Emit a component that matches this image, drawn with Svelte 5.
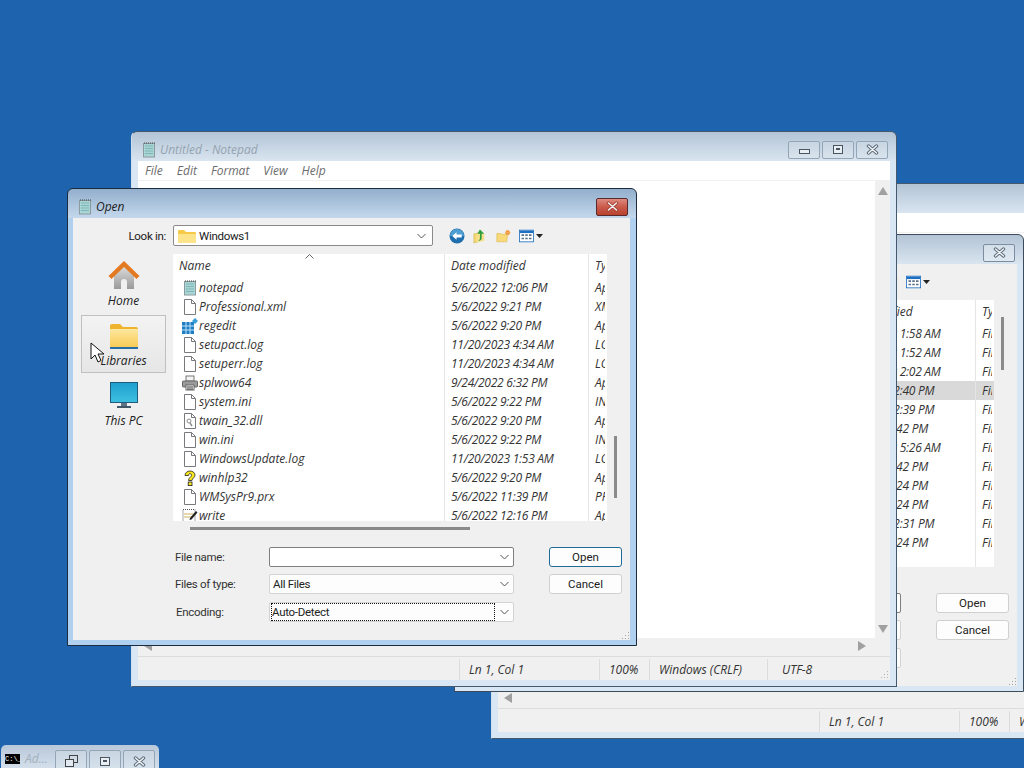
<script lang="ts">
	const rows1 = [
		{ icon: 'notepad', name: 'notepad', date: '5/6/2022 12:06 PM', type: 'Application' },
		{ icon: 'doc', name: 'Professional.xml', date: '5/6/2022 9:21 PM', type: 'XML Document' },
		{ icon: 'regedit', name: 'regedit', date: '5/6/2022 9:20 PM', type: 'Application' },
		{ icon: 'doc', name: 'setupact.log', date: '11/20/2023 4:34 AM', type: 'LOG File' },
		{ icon: 'doc', name: 'setuperr.log', date: '11/20/2023 4:34 AM', type: 'LOG File' },
		{ icon: 'printer', name: 'splwow64', date: '9/24/2022 6:32 PM', type: 'Application' },
		{ icon: 'doc', name: 'system.ini', date: '5/6/2022 9:22 PM', type: 'INI File' },
		{ icon: 'dll', name: 'twain_32.dll', date: '5/6/2022 9:20 PM', type: 'Application' },
		{ icon: 'doc', name: 'win.ini', date: '5/6/2022 9:22 PM', type: 'INI File' },
		{ icon: 'doc', name: 'WindowsUpdate.log', date: '11/20/2023 1:53 AM', type: 'LOG File' },
		{ icon: 'help', name: 'winhlp32', date: '5/6/2022 9:20 PM', type: 'Application' },
		{ icon: 'doc', name: 'WMSysPr9.prx', date: '5/6/2022 11:39 PM', type: 'PRX File' },
		{ icon: 'write', name: 'write', date: '5/6/2022 12:16 PM', type: 'Application' }
	];

	// second dialog sits behind notepad, only the right hand side shows
	const rows2 = [
		'11/20/2023 1:58 AM',
		'11/20/2023 1:52 AM',
		'11/20/2023 2:02 AM',
		'5/6/2022 12:40 PM',
		'5/6/2022 12:39 PM',
		'5/6/2022 9:42 PM',
		'11/20/2023 5:26 AM',
		'5/6/2022 9:42 PM',
		'5/6/2022 9:24 PM',
		'5/6/2022 9:24 PM',
		'5/6/2022 12:31 PM',
		'5/6/2022 9:24 PM'
	].map((date, i) => ({ icon: '', name: '', date, type: 'File folder', selected: i === 3 }));

	const menu = ['File', 'Edit', 'Format', 'View', 'Help'];
</script>

{#snippet notepadIcon()}
	<svg width="16" height="16" viewBox="0 0 16 16">
		<rect x="2.5" y="1.5" width="11" height="13.5" fill="#a9d6d4" stroke="#8c9aa0" />
		<path d="M4 4h8M4 6.5h8M4 9h8M4 11.5h8" stroke="#7fb5b8" />
		<path d="M3 1h1M5 1h1M7 1h1M9 1h1M11 1h1M13 1h1" stroke="#444" />
	</svg>
{/snippet}

{#snippet fileIcon(kind)}
	{#if kind === 'notepad'}
		{@render notepadIcon()}
	{:else if kind === 'doc' || kind === 'dll'}
		<svg width="16" height="16" viewBox="0 0 16 16">
			<path d="M2.5 .5h7l4 4v11h-11z" fill="#fff" stroke="#77797c" />
			<path d="M9.5 .5v4h4" fill="none" stroke="#77797c" />
			{#if kind === 'dll'}
				<circle cx="7" cy="8" r="2" fill="none" stroke="#8a8a8a" />
				<path d="M8 10l2 3" stroke="#8a8a8a" stroke-width="1.4" />
			{/if}
		</svg>
	{:else if kind === 'regedit'}
		<svg width="16" height="16" viewBox="0 0 16 16">
			<rect x="0" y="4" width="12" height="12" fill="#1f7fc4" />
			<path d="M4 4v12M8 4v12M0 8h12M0 12h12" stroke="#bfe0f5" />
			<path d="M13 0l3 3-3 3-3-3z" fill="#3a9fd8" />
		</svg>
	{:else if kind === 'printer'}
		<svg width="16" height="16" viewBox="0 0 16 16">
			<rect x="4" y="1" width="8" height="5" fill="#f4f4f4" stroke="#777" />
			<rect x=".5" y="6" width="15" height="6" rx="1" fill="#9a9a9a" stroke="#666" />
			<rect x="4" y="10" width="8" height="5" fill="#fff" stroke="#666" />
			<path d="M5 12h6M5 14h6" stroke="#333" />
		</svg>
	{:else if kind === 'help'}
		<svg width="16" height="16" viewBox="0 0 16 16">
			<path d="M3 5.500C3 2.500 5.500 1 8 1s5 1.500 5 4.200c0 2.500-3 3-3 5.300H6.500c0-3 3-3.500 3-5.300 0-1-.7-1.500-1.500-1.500S6.500 4.400 6.500 5.500z" fill="#f6e51e" stroke="#222" stroke-width=".8" />
			<rect x="6.200" y="12" width="3.800" height="3.600" fill="#f6e51e" stroke="#222" stroke-width=".8" />
		</svg>
	{:else if kind === 'write'}
		<svg width="16" height="16" viewBox="0 0 16 16">
			<rect x="1" y="1.500" width="12" height="13" fill="#fff" stroke="#555" stroke-dasharray="1 1" />
			<path d="M2 6h10M2 9h8" stroke="#c9b45a" />
			<path d="M14 3l1.500 1.500-6 7-2 .5.500-2z" fill="#222" />
		</svg>
	{/if}
{/snippet}

{#snippet closeGlyph()}
	<svg width="13" height="11" viewBox="0 0 13 11">
		<path d="M2.500 2l8 7M10.500 2l-8 7" stroke="currentColor" stroke-width="3.400" stroke-linecap="round" />
		<path d="M2.500 2l8 7M10.500 2l-8 7" stroke="#f4f7fa" stroke-width="1.400" stroke-linecap="round" />
	</svg>
{/snippet}

{#snippet chevron()}
	<svg class="chev" width="9" height="6" viewBox="0 0 9 6">
		<path d="M.5 1l4 4 4-4" fill="none" stroke="#555" />
	</svg>
{/snippet}

{#snippet dialog(cls, rows, active, thumbTop, thumbHeight)}
	<section class="dialog {cls}" class:inactive={!active}>
		<header class="dlg-title">
			{@render notepadIcon()}
			<span>Open</span>
			<button class="dlg-close" class:red={active}>{@render closeGlyph()}</button>
		</header>
		<div class="dlg-body">
			<div class="lookin">
				<span class="lookin-label">Look in:</span>
				<div class="combo">
					<svg width="18" height="14" viewBox="0 0 18 14">
						<path d="M0 2a1 1 0 0 1 1-1h5l2 2h9a1 1 0 0 1 1 1v9a1 1 0 0 1-1 1H1a1 1 0 0 1-1-1z" fill="#f7c948" />
						<path d="M0 5h18v8a1 1 0 0 1-1 1H1a1 1 0 0 1-1-1z" fill="#fde38a" />
					</svg>
					<span class="combo-text">Windows1</span>
					{@render chevron()}
				</div>
				<div class="tools">
					<svg width="16" height="16" viewBox="0 0 17 17">
						<circle cx="8.500" cy="8.500" r="8" fill="#1f6fae" />
						<path d="M1 8.500a7.500 7.500 0 0 1 15 0z" fill="#4f9ed2" />
						<path d="M3.500 8.500l4.500-4v2.500h5.500v3H8v2.500z" fill="#fff" />
					</svg>
					<svg class="up" width="13" height="16" viewBox="0 0 15 17">
						<path d="M1 6l5-1v10l-5 1.500z" fill="#f4d774" stroke="#cfae45" stroke-width=".6" />
						<path d="M4 16V6h9v8z" fill="#f7e08c" />
						<path d="M8 1l5 5h-3v5c0 2-2 3-4 3 1.500-1 2-2 2-3V6H5z" fill="#2f9e3a" />
					</svg>
					<svg width="15" height="14" viewBox="0 0 18 16">
						<path d="M1 5h5l1 1h7l-1 9H1z" fill="#f7d97a" stroke="#dcb84f" stroke-width=".7" />
						<circle cx="14" cy="4" r="2.800" fill="#ee8a2c" />
						<path d="M14 .5v7M10.500 4h7" stroke="#f7b561" />
					</svg>
					<div class="viewbtn">
						<svg width="15" height="14" viewBox="0 0 18 15">
							<rect x=".5" y=".5" width="17" height="14" fill="#fff" stroke="#1f6fc0" />
							<rect x="1" y="1" width="16" height="3" fill="#1f6fc0" />
							<path d="M3 6.500h3M7.500 6.500h3M12 6.500h3M3 10.500h3M7.500 10.500h3M12 10.500h3" stroke="#5a6f8a" stroke-width="2" />
						</svg>
						<svg width="7" height="4" viewBox="0 0 7 4"><path d="M0 0h7L3.500 4z" fill="#222" /></svg>
					</div>
				</div>
			</div>

			<div class="middle">
				<nav class="places">
					<div class="place">
						<svg width="32" height="32" viewBox="0 0 32 32">
							<defs>
								<linearGradient id="homebody" x1="0" y1="0" x2="0" y2="1">
									<stop offset="0" stop-color="#dcdcdc" />
									<stop offset="1" stop-color="#9a9a9a" />
								</linearGradient>
							</defs>
							<path d="M6 15L16 6l10 9v14H19v-7a3 3 0 0 0-6 0v7H6z" fill="url(#homebody)" />
							<path d="M.5 16L16 1l15.500 15-3 3L16 7 3.500 19z" fill="#e37a22" />
						</svg>
						<span>Home</span>
					</div>
					<div class="place hovered">
						<svg width="32" height="32" viewBox="0 0 32 32">
							<defs>
								<linearGradient id="libbody" x1="0" y1="0" x2="0" y2="1">
									<stop offset="0" stop-color="#fde79f" />
									<stop offset="1" stop-color="#f8cc56" />
								</linearGradient>
							</defs>
							<path d="M2 6a2 2 0 0 1 2-2h8l3 3h13a2 2 0 0 1 2 2v20H2z" fill="#eeb32f" />
							<rect x="2" y="9" width="28" height="18" fill="url(#libbody)" />
							<rect x="2" y="27" width="28" height="2" fill="#2a6ea8" />
						</svg>
						<span>Libraries</span>
					</div>
					<div class="place">
						<svg width="32" height="32" viewBox="0 0 32 32">
							<defs>
								<linearGradient id="pcscreen" x1="0" y1="0" x2="0" y2="1">
									<stop offset="0" stop-color="#1f9fce" />
									<stop offset="1" stop-color="#3dc0e0" />
								</linearGradient>
							</defs>
							<rect x="2.500" y="2.500" width="27" height="20" fill="url(#pcscreen)" stroke="#1f5d80" />
							<rect x="13" y="23" width="6" height="3" fill="#5e7484" />
							<rect x="9" y="26" width="14" height="2" fill="#3f5766" />
						</svg>
						<span>This PC</span>
					</div>
				</nav>

				<div class="list">
					<div class="row head">
						<div class="cell name-cell">Name</div>
						<div class="cell">Date modified</div>
						<div class="cell">Type</div>
					</div>
					<svg class="sort" width="9" height="5" viewBox="0 0 9 5">
						<path d="M.5 4.500l4-4 4 4" fill="none" stroke="#666" />
					</svg>
					{#each rows as r}
						<div class="row" class:selected={r.selected}>
							<div class="cell name-cell">
								{#if r.icon}{@render fileIcon(r.icon)}{/if}
								<span>{r.name}</span>
							</div>
							<div class="cell date-cell">{r.date}</div>
							<div class="cell">{r.type}</div>
						</div>
					{/each}
					<div class="fill">
						<i></i><i></i><i></i>
					</div>
				</div>

				<div class="vtrack">
					<div class="vthumb" style="margin-top: {thumbTop}px; height: {thumbHeight}px"></div>
				</div>
			</div>

			<div class="hthumb"></div>

			<div class="form">
				<span class="lbl">File name:</span>
				<div class="select focus-in">{@render chevron()}</div>
				<button class="btn" class:default={active}>Open</button>
				<span class="lbl">Files of type:</span>
				<div class="select"><span class="lbl">All Files</span>{@render chevron()}</div>
				<button class="btn">Cancel</button>
				<span class="lbl enc">Encoding:</span>
				<div class="select last"><span class="dotted">Auto-Detect</span>{@render chevron()}</div>
			</div>

			<svg class="grip" width="9" height="9" viewBox="0 0 9 9">
				<path d="M7 1h1v1H7zM4 4h1v1H4zM7 4h1v1H7zM1 7h1v1H1zM4 7h1v1H4zM7 7h1v1H7z" fill="#a5a5a5" />
			</svg>
		</div>
	</section>
{/snippet}

{#snippet notepad(cls)}
	<section class="notepad {cls}">
		<header class="np-title">
			{@render notepadIcon()}
			<span>Untitled - Notepad</span>
			<div class="np-buttons">
				<button class="cap"><i class="min"></i></button>
				<button class="cap"><i class="max"></i></button>
				<button class="cap">{@render closeGlyph()}</button>
			</div>
		</header>
		<div class="np-menu">
			{#each menu as m}<span>{m}</span>{/each}
		</div>
		<div class="np-edit">
			<div class="np-text"></div>
			<div class="np-vscroll">
				<svg width="10" height="8" viewBox="0 0 10 8"><path d="M5 0l5 8H0z" fill="#a0a0a0" /></svg>
				<svg width="10" height="8" viewBox="0 0 10 8"><path d="M5 8l5-8H0z" fill="#a0a0a0" /></svg>
			</div>
			<div class="np-hscroll">
				<svg width="8" height="10" viewBox="0 0 8 10"><path d="M0 5l8 5V0z" fill="#a0a0a0" /></svg>
				<svg width="8" height="10" viewBox="0 0 8 10"><path d="M8 5L0 10V0z" fill="#a0a0a0" /></svg>
			</div>
		</div>
		<footer class="np-status">
			<div class="st-grow"></div>
			<div class="st st-pos">Ln 1, Col 1</div>
			<div class="st st-zoom">100%</div>
			<div class="st st-eol">Windows (CRLF)</div>
			<div class="st st-enc">UTF-8</div>
			<svg class="grip" width="9" height="9" viewBox="0 0 9 9">
				<path d="M7 1h1v1H7zM4 4h1v1H4zM7 4h1v1H7zM1 7h1v1H1zM4 7h1v1H4zM7 7h1v1H7z" fill="#b5b5b5" />
			</svg>
		</footer>
	</section>
{/snippet}

<main class="desktop">
	{@render notepad('np-back')}
	{@render dialog('dlg-back', rows2, false, 17, 53)}
	{@render notepad('np-front')}
	{@render dialog('dlg-front', rows1, true, 182, 62)}

	<section class="mini">
		<span class="cmd">C:\_</span>
		<span class="mini-text">Ad...</span>
		<button class="cap mini-btn">
			<svg width="13" height="12" viewBox="0 0 13 12">
				<rect x="4.500" y=".5" width="8" height="7" fill="none" stroke="#444" />
				<rect x=".5" y="4.500" width="8" height="7" fill="#e3e9f0" stroke="#444" />
			</svg>
		</button>
		<button class="cap mini-btn"><i class="max"></i></button>
		<button class="cap mini-btn">{@render closeGlyph()}</button>
	</section>

	<svg class="cursor" width="15" height="21" viewBox="0 0 15 21">
		<path d="M1 1v16l4-4 3 7 3-1.500-3-6.500h6z" fill="#fff" stroke="#111" stroke-width="1" />
	</svg>
</main>

<style>
	:global(body) {
		margin: 0;
	}

	.desktop {
		position: relative;
		width: 1024px;
		height: 768px;
		overflow: hidden;
		background: #1e63ae;
		font-family: 'Open Sans', 'Noto Sans', sans-serif;
		font-size: 12px;
		color: #1a1a1a;
	}

	button {
		font: inherit;
		padding: 0;
	}

	/* notepad windows */
	.notepad {
		position: absolute;
		width: 766px;
		height: 556px;
		box-sizing: border-box;
		display: flex;
		flex-direction: column;
		padding: 0 6px 6px;
		border-radius: 6px 6px 0 0;
		border: 1px solid #44586e;
		border-left-color: #cfdeec;
		background: linear-gradient(#b3c4d6 0, #d9e5f0 29px, #d9e6f3 29px);
	}

	.np-back {
		left: 491px;
		top: 183px;
	}

	.np-front {
		left: 131px;
		top: 131px;
	}

	.np-title {
		height: 29px;
		box-sizing: border-box;
		flex: none;
		display: flex;
		align-items: center;
		gap: 3px;
		padding: 6px 0 0 3px;
		font-style: italic;
		color: #95a3b1;
	}

	.np-buttons {
		margin-left: auto;
		display: flex;
		gap: 2px;
		padding-right: 2px;
	}

	.cap {
		width: 32px;
		height: 18px;
		display: flex;
		align-items: center;
		justify-content: center;
		background: linear-gradient(#c8d5e2, #d8e3ed);
		border: 1px solid #94a5b6;
		border-radius: 2px;
		color: #5c6a78;
	}

	.min {
		display: block;
		width: 9px;
		height: 3px;
		margin-top: 4px;
		border: 1px solid #4a5560;
		background: #e8eef4;
	}

	.max {
		position: relative;
		display: block;
		width: 8px;
		height: 7px;
		border: 1px solid #4a5560;
		background: #e8eef4;
	}

	.max::after {
		content: '';
		position: absolute;
		left: 2px;
		top: 2px;
		width: 4px;
		height: 2px;
		background: #4a5560;
	}

	.np-menu {
		height: 19px;
		flex: none;
		background: #fff;
		display: flex;
		align-items: center;
		gap: 14px;
		padding-left: 7px;
		font-style: italic;
		color: #6c6c6c;
	}

	.np-edit {
		flex: 1;
		display: grid;
		grid-template-columns: 1fr 15px;
		grid-template-rows: 1fr 18px;
		border-top: 1px solid #f0f0f0;
		background: #f0f0f0;
		min-height: 0;
	}

	.np-text {
		background: #fff;
	}

	.np-vscroll {
		display: flex;
		flex-direction: column;
		justify-content: space-between;
		align-items: center;
		padding: 6px 0 5px;
	}

	.np-hscroll {
		grid-column: 1 / 3;
		display: flex;
		justify-content: space-between;
		align-items: center;
		padding: 0 24px 2px 6px;
	}

	.np-status {
		position: relative;
		height: 23px;
		flex: none;
		display: flex;
		background: #f0f0f0;
		border-top: 1px solid #dcdcdc;
		font-style: italic;
		color: #333;
	}

	.st-grow {
		flex: 1;
	}

	.st {
		border-left: 1px solid #dcdcdc;
		padding-left: 9px;
		margin-top: 2px;
		line-height: 21px;
		box-sizing: border-box;
		white-space: nowrap;
	}

	.st-pos {
		width: 140px;
	}

	.st-zoom {
		width: 50px;
	}

	.st-eol {
		width: 118px;
	}

	.st-enc {
		width: 123px;
		padding-left: 14px;
	}

	.np-status .grip {
		position: absolute;
		right: 1px;
		bottom: 1px;
	}

	/* open file dialogs */
	.dialog {
		position: absolute;
		width: 570px;
		height: 458px;
		box-sizing: border-box;
		display: flex;
		flex-direction: column;
		padding: 0 6px 5px 5px;
		border: 1px solid #1c2c3e;
		border-radius: 6px 6px 0 0;
		background: linear-gradient(#93afcd 0, #c4d8ec 29px, #b0d0ef 29px);
	}

	.dialog.inactive {
		background: linear-gradient(#b3c4d6 0, #d9e5f0 29px, #d9e6f3 29px);
		border-color: #3c4c5c;
	}

	.dlg-front {
		left: 67px;
		top: 188px;
	}

	.dlg-back {
		left: 454px;
		top: 234px;
	}

	.dlg-title {
		height: 29px;
		box-sizing: border-box;
		flex: none;
		display: flex;
		align-items: center;
		gap: 3px;
		padding: 6px 0 0 4px;
		font-style: italic;
		color: #222;
	}

	.dlg-close {
		margin-left: auto;
		margin-right: 2px;
		width: 32px;
		height: 18px;
		display: flex;
		align-items: center;
		justify-content: center;
		border: 1px solid #7c8da0;
		border-radius: 2px;
		background: linear-gradient(#d2deea, #e0e9f2);
		color: #5c6a78;
	}

	.dlg-close.red {
		border-color: #5a2a2a;
		background: linear-gradient(#dd8b80, #c9594a 50%, #b8432f);
		color: #a8473a;
	}

	.dlg-body {
		position: relative;
		flex: 1;
		display: flex;
		flex-direction: column;
		min-height: 0;
		background: #f0f0f0;
	}

	.lookin {
		display: flex;
		align-items: center;
		margin-top: 7px;
		height: 21px;
		flex: none;
		font-family: Roboto, sans-serif;
		font-size: 11.5px;
		letter-spacing: -0.3px;
	}

	.lookin-label {
		width: 93px;
		text-align: right;
	}

	.combo {
		margin-left: 7px;
		width: 260px;
		height: 21px;
		box-sizing: border-box;
		display: flex;
		align-items: center;
		gap: 3px;
		padding: 0 6px 0 4px;
		background: #fff;
		border: 1px solid #8a8a8a;
		border-radius: 2px;
	}

	.combo .chev,
	.select .chev {
		margin-left: auto;
	}

	.tools {
		display: flex;
		align-items: center;
		gap: 8px;
		margin-left: 16px;
	}

	.tools .up {
		margin-right: 2px;
	}

	.viewbtn {
		display: flex;
		align-items: center;
		gap: 2px;
	}

	.middle {
		display: flex;
		margin-top: 8px;
		height: 267px;
		flex: none;
	}

	.places {
		width: 100px;
		flex: none;
		box-sizing: border-box;
		padding: 1px 7px 0 8px;
		display: flex;
		flex-direction: column;
		gap: 2px;
	}

	.place {
		height: 58px;
		box-sizing: border-box;
		padding-top: 5px;
		display: flex;
		flex-direction: column;
		align-items: center;
		font-style: italic;
		line-height: 16px;
		color: #222;
	}

	.place span {
		margin-top: 1px;
	}

	.place.hovered {
		background: linear-gradient(#f3f3f3, #e6e6e6);
		border: 1px solid #c0c0c0;
		padding-top: 4px;
	}

	.list {
		position: relative;
		width: 434px;
		flex: none;
		background: #fff;
		overflow: hidden;
		display: flex;
		flex-direction: column;
		font-style: italic;
		color: #333;
	}

	.row {
		display: grid;
		grid-template-columns: 271px 144px 17px;
		height: 19px;
		flex: none;
		line-height: 19px;
	}

	.row.head {
		height: 24px;
		line-height: 23px;
	}

	.row.selected {
		background: #d9d9d9;
	}

	.cell {
		border-left: 1px solid #e5e5e5;
		padding-left: 6px;
		white-space: nowrap;
		overflow: hidden;
	}

	.date-cell {
		letter-spacing: -0.25px;
	}

	.cell.name-cell {
		border-left: none;
		padding-left: 9px;
		display: flex;
		align-items: center;
		gap: 1px;
	}

	.head .name-cell {
		padding-left: 6px;
		align-items: flex-start;
	}

	.sort {
		position: absolute;
		left: 132px;
		top: 0;
	}

	.fill {
		flex: 1;
		display: grid;
		grid-template-columns: 271px 144px 17px;
	}

	.fill i:not(:first-child) {
		border-left: 1px solid #e5e5e5;
	}

	.vtrack {
		padding-left: 7px;
	}

	.vthumb {
		width: 3px;
		background: #8a8a8a;
	}

	.hthumb {
		margin: 6px 0 0 117px;
		width: 280px;
		height: 3px;
		background: #8a8a8a;
		flex: none;
	}

	.form {
		display: grid;
		grid-template-columns: 94px 245px 108px;
		grid-template-rows: 20px 20px 20px;
		row-gap: 7px;
		margin: 17px 0 0 102px;
		align-items: center;
		color: #333;
		font-family: Roboto, sans-serif;
		font-size: 11.5px;
		letter-spacing: -0.3px;
	}

	.lbl {
		padding-bottom: 1px;
	}

	.form .btn {
		margin-left: 35px;
		width: 73px;
		height: 20px;
		background: #fdfdfd;
		border: 1px solid #d0d0d0;
		border-radius: 3px;
		color: #222;
		justify-self: start;
	}

	.form .btn.default {
		border-color: #1f6a96;
	}

	.enc {
		margin-left: 1px;
		padding: 1px 0 0;
	}

	.select {
		position: relative;
		box-sizing: border-box;
		height: 20px;
		display: flex;
		align-items: center;
		padding: 0 4px 0 3px;
		background: #fdfdfd;
		border: 1px solid #d3d3d3;
		border-radius: 2px;
		color: #222;
	}

	.select.focus-in {
		background: #fff;
		border-color: #7f7f7f;
	}

	.dotted {
		width: 222px;
		box-sizing: border-box;
		outline: 1px dotted #111;
		padding-top: 1px;
		line-height: 15px;
		margin-left: -1px;
	}

	.select.last {
		margin-top: 2px;
	}

	.dlg-body > .grip {
		position: absolute;
		right: 0;
		bottom: 0;
	}

	/* minimized console */
	.mini {
		position: absolute;
		left: 1px;
		top: 745px;
		width: 158px;
		height: 30px;
		box-sizing: border-box;
		display: flex;
		gap: 2px;
		padding: 5px 4px 0 4px;
		border-radius: 5px 5px 0 0;
		background: linear-gradient(#b8c8da, #dce6f0);
	}

	.cmd {
		width: 15px;
		height: 10px;
		margin-top: 4px;
		background: #000;
		color: #fff;
		font-family: 'Liberation Mono', monospace;
		font-size: 7px;
		line-height: 10px;
		overflow: hidden;
		flex: none;
	}

	.mini-text {
		width: 31px;
		margin-left: 3px;
		font-style: italic;
		line-height: 18px;
		color: #a4b0bc;
	}

	.mini-btn {
		height: 22px;
		flex: none;
	}

	.cursor {
		position: absolute;
		left: 90px;
		top: 342px;
	}
</style>
